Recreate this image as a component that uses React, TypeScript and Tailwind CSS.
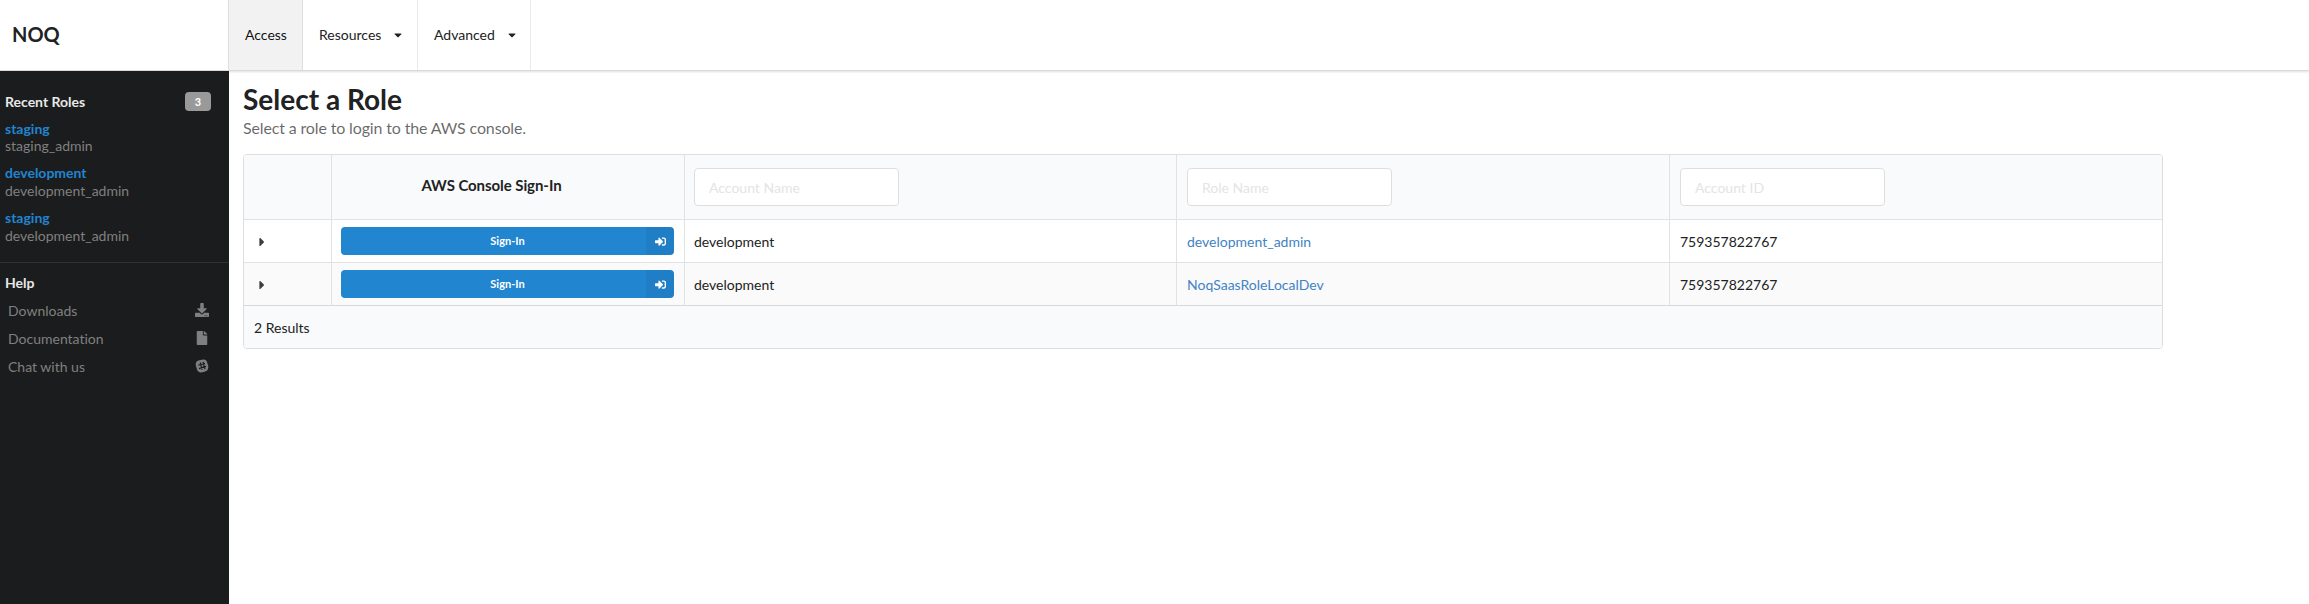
import React from "react";
import { FaCaretDown, FaCaretRight, FaDownload, FaFile, FaSignInAlt } from "react-icons/fa";

const recentRoles = [
  { account: "staging", role: "staging_admin" },
  { account: "development", role: "development_admin" },
  { account: "staging", role: "development_admin" },
];

const rows = [
  { account: "development", role: "development_admin", id: "759357822767" },
  { account: "development", role: "NoqSaasRoleLocalDev", id: "759357822767" },
];

const columns = "grid grid-cols-[87px_353px_492px_493px_493px]";

function SlackIcon() {
  return (
    <svg viewBox="0 0 14 14" className="h-[14px] w-[14px]" fill="none">
      <path
        d="M3.4 1.4 8.2.6Q10.8.3 11.7 2.2L13.2 6.8Q13.9 9.6 12.2 11.4L9.6 12.8 6 13.4Q3.4 13.6 2.4 11.6L.9 7Q.2 4.2 1.6 2.6Z"
        fill="currentColor"
      />
      <path d="M5.2 3.5 7.2 10.8M8 2.9 10 10.2M3.2 6.3 10 4.2M3.9 9.6 11 7.4" stroke="#1b1c1d" strokeWidth="1.2" />
    </svg>
  );
}

function Header() {
  return (
    <header className="relative z-10 flex h-[71px] border-b border-[#d9dada] bg-white shadow-[0_1px_2px_0_rgba(34,36,38,0.15)]">
      <div className="flex w-[228px] items-center pb-[2px] pl-[12px] text-[20px] font-bold">NOQ</div>
      <nav className="flex text-[14px] leading-[14px]">
        <a className="flex w-[75px] items-center border-x border-[#dededf] bg-[#f2f2f2] pl-4 text-black/95">Access</a>
        <a className="flex w-[115px] items-center border-r border-[#e8e9e9] pl-4">
          Resources
          <FaCaretDown className="ml-[11px] h-[12px] w-[12px]" />
        </a>
        <a className="flex w-[113px] items-center border-r border-[#e8e9e9] pl-4">
          Advanced
          <FaCaretDown className="ml-[11px] h-[12px] w-[12px]" />
        </a>
      </nav>
    </header>
  );
}

function Sidebar() {
  return (
    <aside className="relative z-20 flex w-[229px] flex-col bg-[#1b1c1d] text-[14px] text-[#808080]">
      <section className="h-[192px] border-b border-[#303132] pl-[5px] pt-[21px]">
        <div className="mb-[8.8px] flex h-[19px] items-center justify-between pr-[18px]">
          <h2 className="font-bold leading-[19px] text-[#e8e8e8]">Recent Roles</h2>
          <span className="flex h-[19px] w-[26px] items-center justify-center rounded bg-[#999] text-[11px] font-bold leading-[11px] text-white">
            3
          </span>
        </div>
        {recentRoles.map((r, i) => (
          <div key={i} className="mb-[9px] h-[35.6px]">
            <div className="h-[17.6px] font-bold leading-[18px] text-[#2185d0]">{r.account}</div>
            <div className="leading-[18px]">{r.role}</div>
          </div>
        ))}
      </section>
      <section className="pl-[5px] pt-[10px]">
        <h2 className="mb-[4px] h-[19px] font-bold leading-[20px] text-[#e8e8e8]">Help</h2>
        <ul className="pl-[3px] pr-[20px]">
          <li className="flex h-7 items-center justify-between">
            Downloads
            <FaDownload className="h-[14px] w-[14px]" />
          </li>
          <li className="flex h-7 items-center justify-between">
            Documentation
            <FaFile className="h-[14px] w-[14px]" />
          </li>
          <li className="flex h-7 items-center justify-between">
            Chat with us
            <SlackIcon />
          </li>
        </ul>
      </section>
    </aside>
  );
}

function Filter({ placeholder, padding }: { placeholder: string; padding: string }) {
  return (
    <div className={`flex items-center border-l border-[#e1e2e3] ${padding}`}>
      <input
        placeholder={placeholder}
        className="h-[38px] w-[205px] rounded border border-[#dededf] bg-white px-[14px] text-[14px] placeholder:text-[#e4e4e4]"
      />
    </div>
  );
}

function RoleTable() {
  return (
    <div className="mt-[16px] w-[1920px] overflow-hidden rounded border border-[#dededf] text-[14px]">
      <div className={`${columns} h-[65px] border-b border-[#e1e2e3] bg-[#f9fafb]`}>
        <div />
        <div className="flex items-center justify-center border-l border-[#e1e2e3] pb-[4px] pr-[33px] text-[15px] font-bold tracking-[-0.07px]">
          AWS Console Sign-In
        </div>
        <Filter placeholder="Account Name" padding="pl-[9px]" />
        <Filter placeholder="Role Name" padding="pl-[10px]" />
        <Filter placeholder="Account ID" padding="pl-[10px]" />
      </div>
      {rows.map((r, i) => (
        <div key={i} className={`${columns} h-[43px] border-b ${i === 1 ? "border-[#d8d9da] bg-[#fafafa]" : "border-[#e1e2e3]"}`}>
          <div className="flex items-center pl-[11px] pt-px">
            <FaCaretRight className="h-[14px] w-[14px] text-[#3c3d3e]" />
          </div>
          <div className="flex items-center border-l border-[#e1e2e3] pl-[9px]">
            <button className="flex h-[28px] w-[333px] overflow-hidden rounded bg-[#2185d0] text-[11px] font-bold text-white">
              <span className="flex-1 pl-[28px] leading-[28px]">Sign-In</span>
              <span className="flex h-full w-[28px] items-center justify-center bg-black/5">
                <FaSignInAlt className="h-[11px] w-[11px]" />
              </span>
            </button>
          </div>
          <div className="flex items-center border-l border-[#e1e2e3] pl-[9px]">{r.account}</div>
          <div className="flex items-center border-l border-[#e1e2e3] pl-[10px] text-[#4183c4]">{r.role}</div>
          <div className="flex items-center border-l border-[#e1e2e3] pl-[10px]">{r.id}</div>
        </div>
      ))}
      <div className="flex h-[42px] items-center bg-[#f9fafb] pl-[10px]">2 Results</div>
    </div>
  );
}

export default function App() {
  return (
    <div className="flex h-[604px] w-[2309px] flex-col overflow-hidden bg-white font-['Lato',sans-serif] text-[#212223] [font-variant-ligatures:none]">
      <Header />
      <div className="flex flex-1">
        <Sidebar />
        <main className="pl-[14px] pt-[10px]">
          <h1 className="text-[28px] font-bold leading-[36px]">Select a Role</h1>
          <p className="text-[16px] leading-[21px] tracking-[-0.145px] text-black/60">
            Select a role to login to the AWS console.
          </p>
          <RoleTable />
        </main>
      </div>
    </div>
  );
}
